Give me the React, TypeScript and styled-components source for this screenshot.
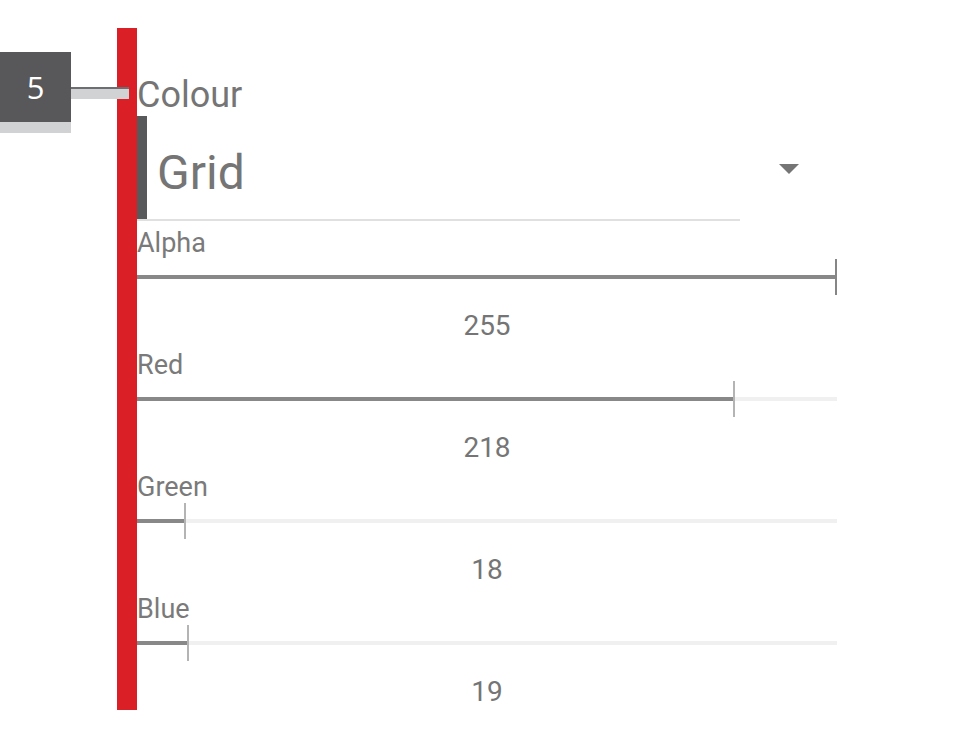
import React from 'react'
import styled, { createGlobalStyle } from 'styled-components'

const GlobalStyle = createGlobalStyle`
  html, body {
    margin: 0;
    padding: 0;
    background: #ffffff;
  }
  body {
    font-family: Roboto, "Liberation Sans", sans-serif;
  }
`

const Page = styled.div`
  display: flex;
  align-items: flex-start;
  padding-top: 28px;
  width: 956px;
  height: 750px;
  box-sizing: border-box;
`

const Gutter = styled.div`
  width: 117px;
  flex-shrink: 0;
  padding-top: 24px;
`

const Badge = styled.div`
  position: relative;
  width: 71px;
  display: flex;
  flex-direction: column;
`

const BadgeNumber = styled.div`
  height: 70px;
  background: #58585a;
  color: #ffffff;
  font-family: "Open Sans", "Liberation Sans", sans-serif;
  font-size: 31px;
  display: flex;
  align-items: center;
  justify-content: center;
`

const BadgeShadow = styled.div`
  height: 11px;
  background: #d1d2d4;
`

const Connector = styled.div`
  position: absolute;
  left: 71px;
  top: 35px;
  width: 58px;
  height: 10px;
  border-top: 2px solid #6d6e71;
  background: #d1d2d4;
  z-index: 2;
`

const Panel = styled.section`
  width: 700px;
  border-left: 20px solid #db1f26;
  padding: 46px 0 2px;
  display: flex;
  flex-direction: column;
  color: #757575;
`

const Heading = styled.div`
  font-size: 36px;
  line-height: 42px;
`

const SelectRow = styled.div`
  display: flex;
  align-items: center;
`

const SelectField = styled.div`
  width: 603px;
  height: 103px;
  display: flex;
  border-bottom: 2px solid #e0e0e0;
`

const SelectBar = styled.div`
  width: 10px;
  background: #58595b;
`

const SelectValue = styled.div`
  padding: 29px 0 0 10px;
  font-size: 48px;
  line-height: 56px;
`

const Arrow = styled.svg`
  margin-left: 39px;
  display: block;
`

const ChannelList = styled.div`
  display: flex;
  flex-direction: column;
  gap: 5px;
  margin-top: 4px;
`

const Channel = styled.div`
  display: flex;
  flex-direction: column;
`

const ChannelLabel = styled.div`
  padding-top: 2px;
  font-size: 27px;
  line-height: 32px;
  color: #7a7a7a;
`

const Slider = styled.div`
  position: relative;
  height: 36px;
  display: flex;
  align-items: center;
`

const Rail = styled.div`
  width: 100%;
  height: 4px;
  background: #f0f0f0;
`

const Fill = styled.div`
  height: 100%;
  background: #888888;
`

const Thumb = styled.div<{ $strong: boolean }>`
  position: absolute;
  top: 0;
  width: 2px;
  height: 100%;
  background: ${p => (p.$strong ? '#868686' : '#b4b4b4')};
`

const ChannelValue = styled.div`
  margin-top: 15px;
  text-align: center;
  font-size: 28px;
  line-height: 32px;
`

const channels = [
  { name: 'Alpha', value: 255 },
  { name: 'Red', value: 218 },
  { name: 'Green', value: 18 },
  { name: 'Blue', value: 19 },
]

export default function App() {
  return (
    <>
      <GlobalStyle />
      <Page>
        <Gutter>
          <Badge>
            <BadgeNumber>5</BadgeNumber>
            <BadgeShadow />
            <Connector />
          </Badge>
        </Gutter>
        <Panel>
          <Heading>Colour</Heading>
          <SelectRow>
            <SelectField>
              <SelectBar />
              <SelectValue>Grid</SelectValue>
            </SelectField>
            <Arrow width="20" height="10" viewBox="0 0 20 10">
              <polygon points="0,0 20,0 10,10" fill="#757575" />
            </Arrow>
          </SelectRow>
          <ChannelList>
            {channels.map(c => {
              const pct = (c.value / 255) * 100
              return (
                <Channel key={c.name}>
                  <ChannelLabel>{c.name}</ChannelLabel>
                  <Slider>
                    <Rail>
                      <Fill style={{ width: `${pct}%` }} />
                    </Rail>
                    <Thumb $strong={c.value === 255} style={{ left: `calc(${pct}% - 2px)` }} />
                  </Slider>
                  <ChannelValue>{c.value}</ChannelValue>
                </Channel>
              )
            })}
          </ChannelList>
        </Panel>
      </Page>
    </>
  )
}
